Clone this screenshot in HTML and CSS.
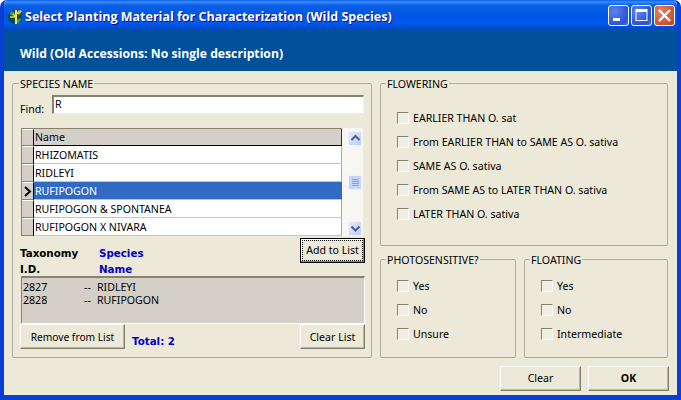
FILE: index.html
```html
<!DOCTYPE html>
<html lang="en">
<head>
<meta charset="utf-8">
<title>Select Planting Material</title>
<link rel="stylesheet" href="styles.css">
</head>
<body>
<div class="window">
  <div class="titlebar">
    <svg class="appicon" width="18" height="18" viewBox="0 0 18 18">
      <circle cx="9" cy="9" r="7" fill="#0c4a3a"/>
      <path d="M3 6l3-3 3 2-2 3zM10 12l4-2 1 2-3 4z" fill="#3f9a5a"/>
      <path d="M10 2v14" stroke="#f1e27a" stroke-width="2"/>
      <path d="M4 9h6M7 6l3 3M13 3l-3 4" stroke="#e8d84a" stroke-width="1.5" fill="none"/>
      <path d="M11 5l3-3 2 1-3 4z" fill="#d9c23a"/>
    </svg>
    <span class="title">Select Planting Material for Characterization (Wild Species)</span>
    <div class="caption-btns">
      <div class="cap cap-blue"><svg width="21" height="21" viewBox="0 0 21 21"><rect x="5" y="13" width="7" height="3" fill="#fff"/></svg></div>
      <div class="cap cap-blue"><svg width="21" height="21" viewBox="0 0 21 21"><rect x="5" y="4.5" width="11" height="11" fill="none" stroke="#fff"/><rect x="5" y="4" width="11" height="3" fill="#fff"/></svg></div>
      <div class="cap cap-red"><svg width="21" height="21" viewBox="0 0 21 21"><path d="M5 5l11 11M16 5L5 16" stroke="#fff" stroke-width="2.4" fill="none"/></svg></div>
    </div>
  </div>
  <div class="banner">Wild (Old Accessions: No single description)</div>
  <div class="main">
    <div class="group species">
      <span class="legend">SPECIES NAME</span>
      <div class="find-row">
        <span class="find-label">Find:</span>
        <div class="input">R</div>
      </div>
      <div class="datagrid">
        <div class="table">
          <div class="row row-head"><div class="rowhead"></div><div class="cell">Name</div></div>
          <div class="row"><div class="rowhead"></div><div class="cell">RHIZOMATIS</div></div>
          <div class="row"><div class="rowhead"></div><div class="cell">RIDLEYI</div></div>
          <div class="row row-sel"><div class="rowhead"><svg width="9" height="11" viewBox="0 0 9 11"><path d="M2 1l5 4.5L2 10" fill="none" stroke="#000" stroke-width="2"/></svg></div><div class="cell">RUFIPOGON</div></div>
          <div class="row"><div class="rowhead"></div><div class="cell">RUFIPOGON &amp; SPONTANEA</div></div>
          <div class="row"><div class="rowhead"></div><div class="cell">RUFIPOGON X NIVARA</div></div>
        </div>
        <div class="scrollbar">
          <div class="sb-btn"><svg width="15" height="15" viewBox="0 0 15 15"><path d="M3.500 9l4-4 4 4" fill="none" stroke="#4d6185" stroke-width="2"/></svg></div>
          <div class="sb-thumb"><svg width="7" height="7" viewBox="0 0 7 7"><path d="M0 .5h7M0 2.500h7M0 4.500h7M0 6.500h7" stroke="#8ba2d8"/></svg></div>
          <div class="sb-btn"><svg width="15" height="15" viewBox="0 0 15 15"><path d="M3.500 5.500l4 4 4-4" fill="none" stroke="#4d6185" stroke-width="2"/></svg></div>
        </div>
      </div>
      <div class="add-row">
        <div class="headings">
          <b class="h-black">Taxonomy</b><b class="h-blue">Species</b>
          <b class="h-black">I.D.</b><b class="h-blue">Name</b>
        </div>
        <div class="btn btn-default"><span class="focus">Add to List</span></div>
      </div>
      <div class="listbox">
        <div class="item"><span class="i-id">2827</span><span class="i-sep">--</span><span>RIDLEYI</span></div>
        <div class="item"><span class="i-id">2828</span><span class="i-sep">--</span><span>RUFIPOGON</span></div>
      </div>
      <div class="list-actions">
        <div class="btn btn-remove">Remove from List</div>
        <b class="total">Total: 2</b>
        <div class="btn btn-clearlist">Clear List</div>
      </div>
    </div>
    <div class="right">
      <div class="group flowering">
        <span class="legend">FLOWERING</span>
        <label class="check"><i class="box"></i>EARLIER THAN O. sat</label>
        <label class="check"><i class="box"></i>From EARLIER THAN to SAME AS O. sativa</label>
        <label class="check"><i class="box"></i>SAME AS O. sativa</label>
        <label class="check"><i class="box"></i>From SAME AS to LATER THAN O. sativa</label>
        <label class="check"><i class="box"></i>LATER THAN O. sativa</label>
      </div>
      <div class="pair">
        <div class="group photo">
          <span class="legend">PHOTOSENSITIVE?</span>
          <label class="check"><i class="box"></i>Yes</label>
          <label class="check"><i class="box"></i>No</label>
          <label class="check"><i class="box"></i>Unsure</label>
        </div>
        <div class="group floating">
          <span class="legend">FLOATING</span>
          <label class="check"><i class="box"></i>Yes</label>
          <label class="check"><i class="box"></i>No</label>
          <label class="check"><i class="box"></i>Intermediate</label>
        </div>
      </div>
      <div class="actions">
        <div class="btn btn-action">Clear</div>
        <div class="btn btn-action btn-ok">OK</div>
      </div>
    </div>
  </div>
</div>
</body>
</html>
```
FILE: styles.css
```css
* { box-sizing: border-box; }
html, body { margin: 0; padding: 0; background: #fff; }
body { font: 10.6px/13px "Noto Sans", "Liberation Sans", sans-serif; color: #000; }

.window {
  width: 681px; height: 400px; display: flex; flex-direction: column;
  background: #ece9d8; border-radius: 7px 7px 0 0; overflow: hidden;
  border-left: 4px solid #0a3fd6; border-right: 4px solid #0a3fd6; border-bottom: 5px solid #0a3fd6;
}
.titlebar {
  height: 30px; margin: 0 -4px; padding: 3px 6px 0 6px; display: flex; align-items: center; flex: none;
  background: linear-gradient(#0a5ce8 0, #3c8cf8 2px, #0a5fe6 5px, #0055e5 50%, #0059ee 75%, #0048c8 100%);
}
.appicon { margin-right: 1px; }
.title { font: bold 12.5px/16px "Open Sans", "DejaVu Sans", sans-serif; color: #fff; text-shadow: 1px 1px #0f1089; white-space: nowrap; flex: 1; }
.caption-btns { display: flex; gap: 2px; margin-top: -2px; }
.cap { width: 21px; height: 21px; border: 1px solid #fff; border-radius: 3px; }
.cap svg { display: block; margin: -1px; }
.cap-blue { background: radial-gradient(circle at 30% 30%, #5b85ee, #2a53d8 70%, #4067dc); }
.cap-red { background: radial-gradient(circle at 30% 30%, #e9805e, #d4502c 70%, #c5401e); }

.banner {
  height: 41px; flex: none; background: #00509a; color: #fff; padding: 16px 0 0 16px;
  font: bold 12.2px/16px "Open Sans", "DejaVu Sans", sans-serif; margin: 0;
}

.main { flex: 1; display: flex; gap: 8px; padding: 12px 0 0 8px; align-items: flex-start; }

.group { position: relative; border: 1px solid #b0ad9c; border-radius: 2px; }
.legend { position: absolute; top: -5px; left: 6px; padding: 0 1px; background: #ece9d8; white-space: nowrap; line-height: 11px; }
.flowering .legend, .photo .legend, .floating .legend { left: 5px; }

.species { width: 360px; height: 275px; padding: 11px 7px 0 7px; }
.find-row { display: flex; height: 19px; }
.find-label { width: 32px; padding-top: 8px; }
.input {
  width: 312px; height: 19px; background: #fff; padding: 1px 1px 0;
  border-style: solid; border-width: 2px 1px 1px 2px; border-color: #85826f #f2f0e4 #f2f0e4 #85826f;
}
.datagrid { display: flex; margin: 14px -1px 0 1px; height: 108px; }
.table { width: 321px; border-top: 1px solid #85826f; border-left: 1px solid #85826f; }
.row { display: flex; height: 18px; }
.row-head { height: 17px; }
.rowhead {
  width: 12px; flex: none; background: #d4d0c8; border-right: 1px solid #000;
  border-top: 1px solid #fff; border-bottom: 1px solid #85826f; display: flex; align-items: center; justify-content: center;
}
.cell { flex: 1; background: #fff; padding: 3px 0 0 1px; border-bottom: 1px solid #c4c4c4; white-space: nowrap; border-right: 1px solid #aaa; }
.row-head .cell { background: #d4d0c8; padding-top: 2px; border-bottom: 1px solid #000; border-right: 1px solid #333; }
.row-sel .cell { background: #316ac5; color: #fff; border-right-color: #316ac5; }
.scrollbar {
  width: 21px; background: #f7f6f0; padding: 3px 1px 0 6px; display: flex; flex-direction: column;
  align-items: stretch;
}
.sb-btn { height: 15px; background: linear-gradient(135deg, #e1eafe, #bccdf7); border: 1px solid #eef2fd; border-radius: 2px; }
.sb-btn svg { display: block; margin: -1px; }
.sb-thumb {
  height: 15px; margin: 29px 0 31px; background: #c6d4f8; border: 1px solid #eef2fd; border-radius: 2px;
  display: flex; align-items: center; justify-content: center;
}
.sb-thumb svg { display: block; }

.add-row { display: flex; justify-content: space-between; height: 40px; padding-top: 2px; margin-right: -1px; }
.headings { display: grid; grid-template-columns: 79px auto; grid-auto-rows: 16px; padding-top: 7px; align-content: start; }
.headings b, .total { font: bold 10.3px/16px "DejaVu Sans", sans-serif; }
.h-black { color: #000; }
.h-blue, .total { color: #0000c8; }

.btn {
  display: flex; align-items: center; justify-content: center; background: #ece9d8; white-space: nowrap;
  border: 1px solid; border-color: #fff #85826f #85826f #fff; box-shadow: inset -1px -1px #b8b5a4;
}
.btn-default { width: 65px; height: 25px; border: 1px solid #000; box-shadow: inset -1px -1px #85826f, inset 1px 1px #fff; padding: 2px; }
.focus { display: block; width: 100%; text-align: center; line-height: 19px; outline: 1px dotted #000; outline-offset: 0; height: 19px; }

.listbox {
  height: 48px; width: 344px; padding: 3px 2px 0 1px; background: #d4d0c8; margin-left: 1px;
  border-style: solid; border-width: 2px 1px 1px 1px; border-color: #85826f #fff #fff #85826f;
}
.item { display: flex; height: 13px; white-space: nowrap; }
.i-id { width: 61px; }
.i-sep { width: 13px; }

.list-actions { display: flex; height: 25px; margin-right: -1px; }
.list-actions .btn { padding-top: 1px; }
.btn-remove { width: 105px; font-size: 10.2px; }
.total { margin: 9px 0 0 7px; color: #0000c8; }
.btn-clearlist { width: 65px; margin-left: auto; }

.right { width: 288px; display: flex; flex-direction: column; }
.flowering { height: 163px; padding: 22px 0 0 16px; }
.pair { display: flex; gap: 8px; margin-top: 13px; }
.photo { width: 136px; height: 99px; padding: 14px 0 0 16px; }
.floating { width: 144px; height: 99px; padding: 14px 0 0 16px; }
.check { display: flex; align-items: center; height: 24px; gap: 4px; white-space: nowrap; }
.box {
  width: 12px; height: 12px; flex: none; background: #f1efe4;
  border-style: solid; border-width: 1px; border-color: #85826f #fff #fff #85826f;
}
.actions { display: flex; gap: 7px; justify-content: flex-end; margin: 8px -1px 0 0; }
.btn-action { width: 81px; height: 25px; }
.btn-ok { font-weight: bold; }
```
